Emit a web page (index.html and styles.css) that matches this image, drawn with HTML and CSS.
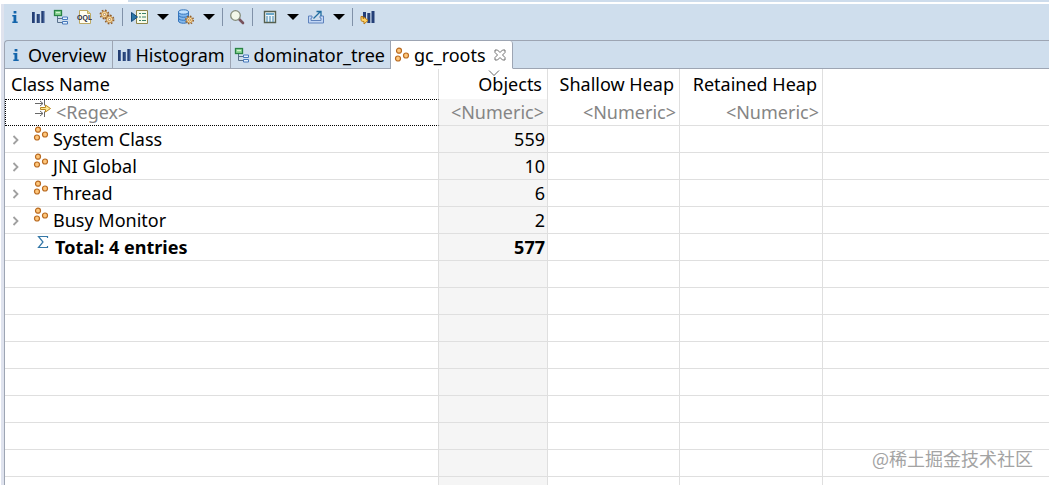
FILE: index.html
```html
<!DOCTYPE html>
<html lang="en">
<head>
<meta charset="utf-8">
<title>gc_roots</title>
<link rel="stylesheet" href="styles.css">
</head>
<body>
<svg class="defs" aria-hidden="true">
  <symbol id="info" viewBox="0 0 16 16"><path d="M6.600 2h2.800v2.500H6.600zM5.300 6h4v6.500h1.400V14H5.300v-1.500h1.200V7.500H5.300z" fill="#1465ab"/></symbol>
  <symbol id="bars" viewBox="0 0 16 16"><path d="M2 3h3v11H2zM6.700 5h3v9h-3zM11.300 2h3v12h-3z" fill="#253f73"/><path d="M4 3h1v11H4zM8.700 5h1v9h-1zM13.300 2h1v12h-1z" fill="#4766a0"/></symbol>
  <symbol id="tree" viewBox="0 0 16 16"><path d="M4.500 7v6.500H9M4.500 9.500H9" fill="none" stroke="#58708b"/><rect x="1.500" y="1.500" width="7" height="5" fill="#8fd797" stroke="#298344" stroke-width="1.300"/><path d="M3 3h4v1H3z" fill="#d0f3cf"/><path d="M9.500 8h5v2.500h-5zM9.500 12.500h5V15h-5z" fill="#e5f2ff" stroke="#4779bb"/></symbol>
  <symbol id="oql" viewBox="0 0 16 16"><path d="M3.500 1.500h8l3 3v10h-11z" fill="#fffdf1" stroke="#bda964"/><path d="M11.500 1.500v3h3" fill="#ead68e" stroke="#bda964"/><text x="1" y="11" font-family="Liberation Sans, sans-serif" font-size="7" font-weight="700" fill="#252b48">OQL</text></symbol>
  <symbol id="gear" viewBox="0 0 16 16"><circle cx="8" cy="8" r="6" fill="none" stroke="#925f2b" stroke-width="2.400" stroke-dasharray="2.400 2.312"/><circle cx="8" cy="8" r="4.600" fill="#ffe5a4" stroke="#b57b38" stroke-width="1.300"/><circle cx="8" cy="8" r="1.700" fill="#fff" stroke="#935c29"/></symbol>
  <symbol id="gears" viewBox="0 0 16 16"><use href="#gear" x="0" y="0" width="11" height="11"/><use href="#gear" x="5" y="5" width="11" height="11"/></symbol>
  <symbol id="report" viewBox="0 0 18 16"><path d="M5.500 1.500h11v13h-11z" fill="#f7fae8" stroke="#8e8448"/><path d="M8 4.500h2M11 4.500h4M8 8h2M11 8h4M8 11.500h2M11 11.500h4" stroke="#398269"/><path d="M.5 3.500l6 4.500-6 4.500z" fill="#2b76a5" stroke="#174b7a"/></symbol>
  <symbol id="database" viewBox="0 0 18 16"><path d="M1.500 3v9c0 3 10 3 10 0V3" fill="#83b8ed" stroke="#3474bb"/><ellipse cx="6.500" cy="3" rx="5" ry="2.200" fill="#c2e2ff" stroke="#3474bb"/><path d="M1.500 6c0 3 10 3 10 0M1.500 9c0 3 10 3 10 0" fill="none" stroke="#3474bb"/><use href="#gear" x="7.500" y="6" width="10" height="10"/></symbol>
  <symbol id="search" viewBox="0 0 16 16"><path d="M10 10l4 4" stroke="#77525c" stroke-width="2.600" stroke-linecap="round"/><circle cx="6.500" cy="6.500" r="4.800" fill="#f3f8e9" stroke="#858d7c" stroke-width="1.300"/></symbol>
  <symbol id="calc" viewBox="0 0 16 16"><path d="M2.500 2.500h11v11h-11z" fill="#eef7fb" stroke="#56604f" stroke-width="1.400"/><path d="M4 4h8v2H4z" fill="#6aa7ca"/><path d="M4 8h8M4 10h8M4 12h8" stroke="#3b81ac" stroke-dasharray="2 1"/></symbol>
  <symbol id="export" viewBox="0 0 18 16"><path d="M1.500 7v7h15V7H13v2h1v2.500H4V9h1V7z" fill="#c3d7f5" stroke="#5e82bd"/><path d="M6.500 9.500l7-7M9.500 2.500H14V7" fill="none" stroke="#216da0" stroke-width="1.300"/></symbol>
  <symbol id="compare" viewBox="0 0 16 16"><path d="M4 3h3v7H4zM8.300 4h3v10h-3zM12.500 2h3v12h-3z" fill="#243f78"/><path d="M2 7.500v3.500c0 1 1 1.500 3 1.500V15l4-3.500-4-3.500v1.500H4v-2z" fill="#ffd467" stroke="#b97a19"/></symbol>
  <symbol id="roots" viewBox="0 0 16 16"><g fill="#ffc77b" stroke="#b96a20" stroke-width="1.200"><circle cx="5" cy="3.700" r="2.500"/><circle cx="4" cy="11.500" r="2.500"/><circle cx="12" cy="8.500" r="2.500"/></g></symbol>
  <symbol id="filter" viewBox="0 0 18 18"><path d="M1 3.500h8M6 1l3 2.500L6 6M10.500 0v5.500M1 13.500h8M6 11l3 2.500L6 16M10.500 11.500V17" fill="none" stroke="#686868"/><path d="M6.500 7.500h5V5l5 3.500-5 3.500V9.500h-5z" fill="#ffe994" stroke="#b88620"/></symbol>
  <symbol id="sigma" viewBox="0 0 12 14"><path d="M10.500 3V1.500H1.500L6 7l-4.500 5.500h9V11" fill="none" stroke="#3678a7" stroke-width="1.200"/></symbol>
  <symbol id="chevron" viewBox="0 0 8 10"><path d="M1.500 1l4 4-4 4" fill="none" stroke="#a0a0a0" stroke-width="1.800"/></symbol>
  <symbol id="caret" viewBox="0 0 12 6"><path d="M0 0h12L6 6z"/></symbol>
  <symbol id="close" viewBox="0 0 12 12"><path d="M1 1h2.500L6 3.500 8.500 1H11v2.500L8.500 6 11 8.500V11H8.500L6 8.500 3.500 11H1V8.500L3.500 6 1 3.500z" fill="#fff" stroke="#707070"/></symbol>
  <symbol id="sort" viewBox="0 0 12 6"><path d="M1 .5l5 5 5-5" fill="none" stroke="#666"/></symbol>
</svg>
<div class="app">
  <div class="top-edge"></div>
  <main class="pane">
    <div class="toolbar" role="toolbar" aria-label="Heap tools">
      <button class="tool" aria-label="Overview"><svg><use href="#info"/></svg></button>
      <button class="tool" aria-label="Histogram"><svg><use href="#bars"/></svg></button>
      <button class="tool" aria-label="Dominator tree"><svg><use href="#tree"/></svg></button>
      <button class="tool" aria-label="Query"><svg><use href="#oql"/></svg></button>
      <button class="tool" aria-label="Thread overview"><svg><use href="#gears"/></svg></button>
      <span class="divider"></span>
      <button class="tool menu" aria-label="Run report"><svg class="wide"><use href="#report"/></svg><svg class="caret"><use href="#caret"/></svg></button>
      <button class="tool menu" aria-label="Query browser"><svg class="wide"><use href="#database"/></svg><svg class="caret"><use href="#caret"/></svg></button>
      <span class="divider"></span>
      <button class="tool" aria-label="Find"><svg><use href="#search"/></svg></button>
      <span class="divider"></span>
      <button class="tool menu" aria-label="Calculate retained size"><svg class="wide"><use href="#calc"/></svg><svg class="caret"><use href="#caret"/></svg></button>
      <button class="tool menu" aria-label="Export"><svg class="wide"><use href="#export"/></svg><svg class="caret"><use href="#caret"/></svg></button>
      <span class="divider"></span>
      <button class="tool" aria-label="Compare"><svg><use href="#compare"/></svg></button>
    </div>
    <div class="tabs" role="tablist">
      <button class="tab" role="tab"><svg><use href="#info"/></svg>Overview</button>
      <button class="tab" role="tab"><svg><use href="#bars"/></svg>Histogram</button>
      <button class="tab" role="tab"><svg><use href="#tree"/></svg>dominator_tree</button>
      <button class="tab active" role="tab" aria-selected="true"><svg><use href="#roots"/></svg>gc_roots<svg class="close"><use href="#close"/></svg></button>
    </div>
    <div class="content">
      <table class="grid">
        <colgroup><col class="c-name"><col class="c-objects"><col class="c-shallow"><col class="c-retained"><col></colgroup>
        <thead>
          <tr><th class="name">Class Name</th><th class="sorted">Objects<svg class="sort"><use href="#sort"/></svg></th><th>Shallow Heap</th><th>Retained Heap</th><th></th></tr>
        </thead>
        <tbody>
          <tr class="filter"><td><div class="cell"><svg class="filter-icon"><use href="#filter"/></svg>&lt;Regex&gt;</div></td><td>&lt;Numeric&gt;</td><td>&lt;Numeric&gt;</td><td>&lt;Numeric&gt;</td><td></td></tr>
          <tr><td><div class="cell"><svg class="chevron"><use href="#chevron"/></svg><svg class="node"><use href="#roots"/></svg>System Class</div></td><td>559</td><td></td><td></td><td></td></tr>
          <tr><td><div class="cell"><svg class="chevron"><use href="#chevron"/></svg><svg class="node"><use href="#roots"/></svg>JNI Global</div></td><td>10</td><td></td><td></td><td></td></tr>
          <tr><td><div class="cell"><svg class="chevron"><use href="#chevron"/></svg><svg class="node"><use href="#roots"/></svg>Thread</div></td><td>6</td><td></td><td></td><td></td></tr>
          <tr><td><div class="cell"><svg class="chevron"><use href="#chevron"/></svg><svg class="node"><use href="#roots"/></svg>Busy Monitor</div></td><td>2</td><td></td><td></td><td></td></tr>
          <tr class="total"><td><div class="cell"><svg class="sigma"><use href="#sigma"/></svg>Total: 4 entries</div></td><td>577</td><td></td><td></td><td></td></tr>
          <tr><td></td><td></td><td></td><td></td><td></td></tr>
          <tr><td></td><td></td><td></td><td></td><td></td></tr>
          <tr><td></td><td></td><td></td><td></td><td></td></tr>
          <tr><td></td><td></td><td></td><td></td><td></td></tr>
          <tr><td></td><td></td><td></td><td></td><td></td></tr>
          <tr><td></td><td></td><td></td><td></td><td></td></tr>
          <tr><td></td><td></td><td></td><td></td><td></td></tr>
          <tr><td></td><td></td><td></td><td></td><td></td></tr>
          <tr><td></td><td></td><td></td><td></td><td></td></tr>
        </tbody>
      </table>
      <div class="watermark" lang="zh">@稀土掘金技术社区</div>
    </div>
  </main>
</div>
</body>
</html>
```
FILE: styles.css
```css
* { box-sizing: border-box; }
body { margin: 0; font-family: "Noto Sans", "Noto Sans CJK SC", sans-serif; font-size: 18px; color: #000; }
button { border: 0; padding: 0; background: none; font: inherit; color: inherit; }
svg { display: block; flex: none; width: 16px; height: 16px; }
.defs { position: absolute; width: 0; height: 0; }
.app { display: flex; flex-direction: column; height: 100vh; overflow: hidden; background: #fff; }
.top-edge { flex: none; height: 4px; margin-left: 128px; background: #cddcec; border-bottom: 2px solid #fff; }
.pane { flex: 1; min-height: 0; display: flex; flex-direction: column; margin-left: 4px; background: #cfdeed; box-shadow: -3px 0 0 #dfe3ee; }
.toolbar { flex: none; display: flex; align-items: center; gap: 7px; height: 36px; padding: 0 3px 10px; }
.toolbar .divider { width: 1px; height: 18px; margin: 0 -1px; background: #8091a8; }
.tool { display: flex; align-items: center; }
.tool.menu { gap: 8px; padding-left: 1px; }
.wide { width: 18px; }
.caret { width: 12px; height: 6px; }
.tool + .divider { margin-left: 0; }
.divider + .menu { padding-left: 2px; }
.tabs { flex: none; display: flex; height: 29px; border-top: 1px solid #9da5b3; border-left: 1px solid #9da5b3; border-top-left-radius: 4px; }
.tab { display: flex; align-items: center; gap: 4px; padding: 0 5px 0 3px; border-right: 1px solid #9da5b3; border-bottom: 1px solid #9da5b3; }
.tabs::after { content: ""; flex: 1; border-bottom: 1px solid #9da5b3; }
.tab.active { background: #fff; border-bottom-color: #fff; border-top-right-radius: 3px; }
.tab .close { width: 12px; height: 12px; margin: 0 1px 0 4px; }
.content { position: relative; flex: 1; min-height: 0; overflow: hidden; background: #fff; border-left: 1px solid #9da5b3; }
.grid { width: 100%; table-layout: fixed; border-collapse: separate; border-spacing: 0; }
.c-name { width: 434px; }
.c-objects { width: 109px; }
.c-shallow { width: 132px; }
.c-retained { width: 143px; }
th, td { padding: 0 2px 0 0; line-height: 26px; text-align: right; white-space: nowrap; border-right: 1px solid #dfdfdf; }
th { height: 30px; padding-right: 5px; font-weight: 400; }
td { height: 27px; border-bottom: 1px solid #dfdfdf; }
th:last-child, td:last-child { border-right: 0; }
.name { padding-left: 6px; text-align: left; }
.sorted { position: relative; }
.sort { position: absolute; top: 1px; left: 49px; width: 12px; height: 6px; }
td:nth-child(2) { background: #f5f5f5; }
.filter td { padding-right: 3px; color: #858585; }
.filter td:first-child { padding: 0; border-top: 1px dotted #000; border-bottom: 1px dotted #000; border-left: 1px dotted #000; }
.filter .cell { line-height: 25px; }
.cell { display: flex; align-items: flex-start; }
.chevron { width: 8px; height: 10px; margin: 9px 13px 0 7px; }
.node { margin: 0 4px 0 0; }
.filter-icon { width: 18px; height: 18px; margin: 0 4px 0 28px; }
.sigma { width: 12px; height: 14px; margin: 1px 6px 0 32px; }
.total { font-weight: 700; }
.watermark { position: absolute; right: 16px; bottom: 13px; font-family: "Noto Sans CJK SC", sans-serif; font-size: 18px; line-height: 28px; color: #a3a3a3; }
```
